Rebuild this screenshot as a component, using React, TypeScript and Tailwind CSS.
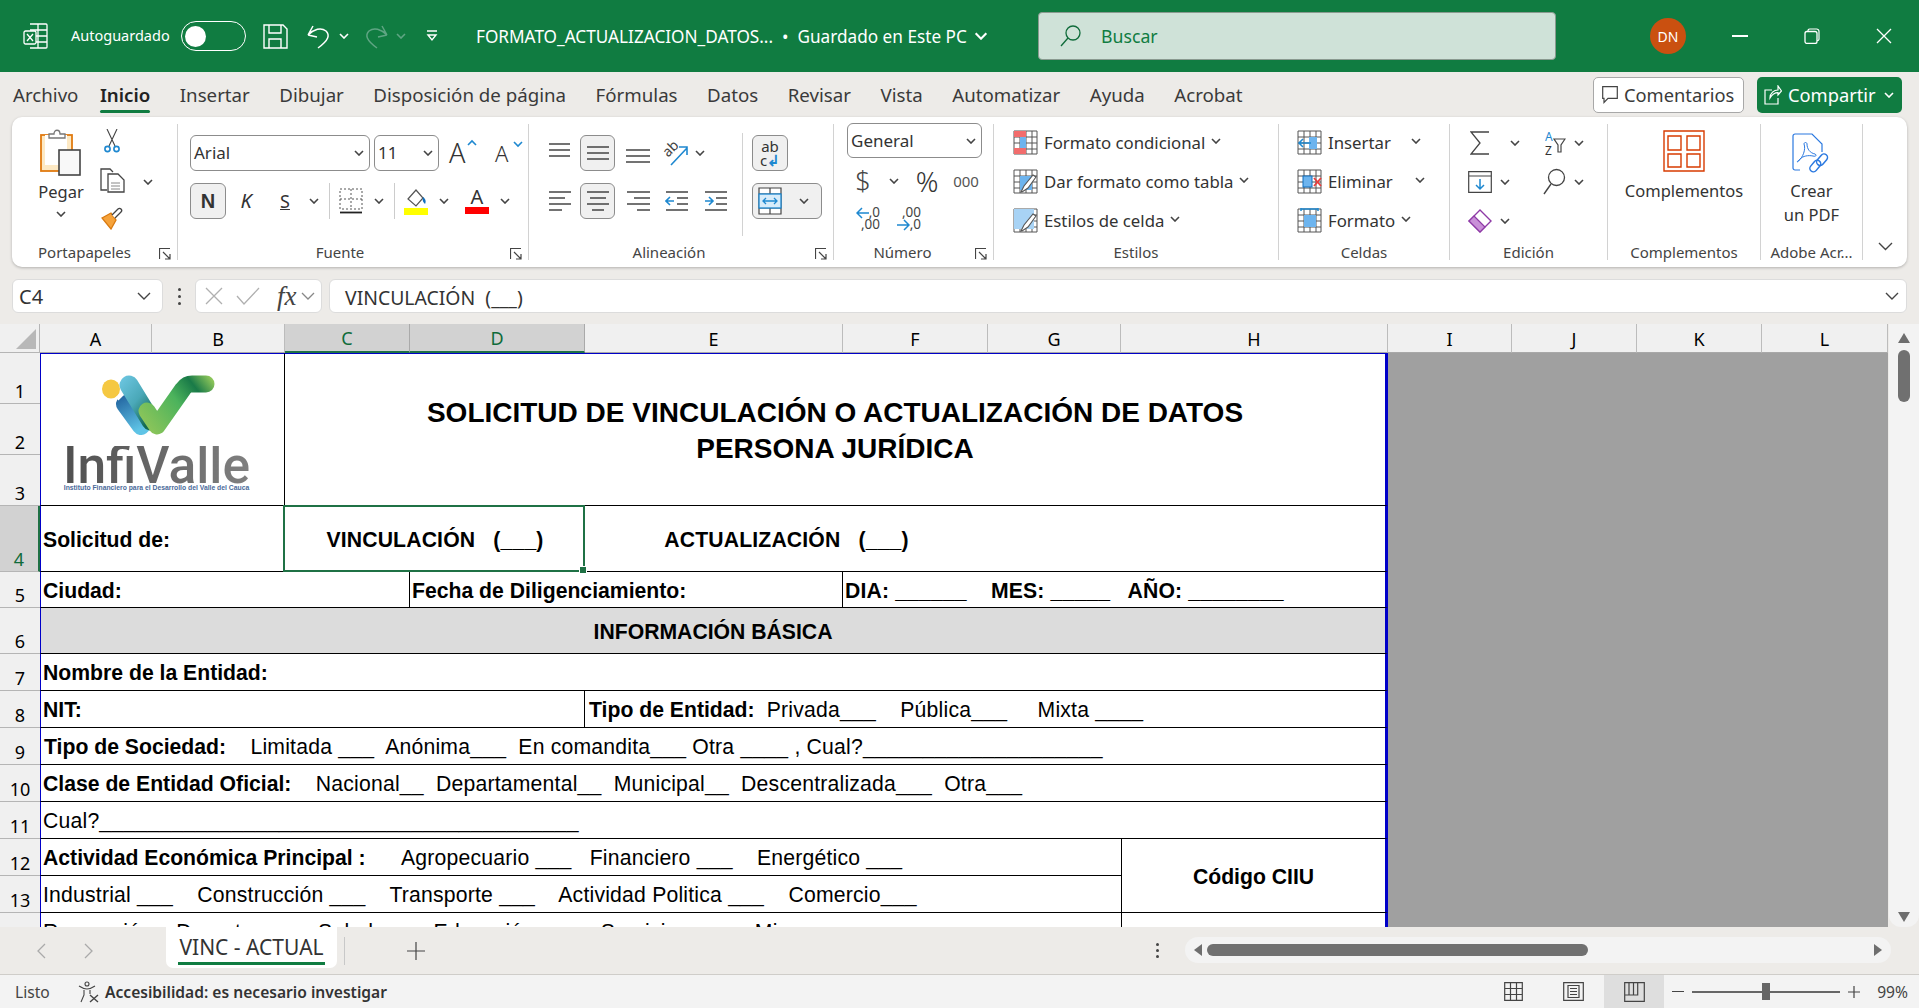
import React from 'react';
import clsx from 'clsx';

const Chev = ({ color = '#444', className }: { color?: string; className?: string }) => (
  <svg width="10" height="6" viewBox="0 0 10 6" className={clsx('shrink-0', className)}>
    <path d="M1 1l4 4 4-4" fill="none" stroke={color} strokeWidth="1.6" />
  </svg>
);

const Slot = ({ className, children }: { className: string; children?: React.ReactNode }) => (
  <div className={clsx('flex items-center justify-center shrink-0 h-full', className)}>{children}</div>
);

const Launcher = () => (
  <svg width="12" height="12" viewBox="0 0 12 12" className="absolute right-[6px] bottom-[0px]">
    <path d="M.5 11V.5H11M4 4l7 7M11 6v5H6" fill="none" stroke="#444" strokeWidth="1.2" />
  </svg>
);

const Group = ({ className, label, labelClass, launcher, children }: { className: string; label: string; labelClass?: string; launcher?: boolean; children?: React.ReactNode }) => (
  <div className={clsx('relative flex flex-col shrink-0 my-[7px] border-r border-[#d2d2d2]', className)}>
    <div className="flex-1 min-h-0">{children}</div>
    <div className={clsx('h-[12px] mb-[2px] flex items-center justify-center text-[15px] text-[#444] whitespace-nowrap', labelClass)}>{label}</div>
    {launcher && <Launcher />}
  </div>
);

const Select = ({ className, text }: { className: string; text: string }) => (
  <div className={clsx('flex items-center justify-between h-[36px] px-[3px] pr-[5px] rounded-[6px] border border-[#8c8c8c] text-[17px] text-[#333] shrink-0', className)}>
    <span>{text}</span>
    <Chev />
  </div>
);

const Lines = ({ ys }: { ys: [number, number, number][] }) => (
  <svg width="24" height="22" viewBox="0 0 24 22">
    {ys.map(([y, a, b]) => (
      <path key={y + '-' + a} d={`M${a} ${y}H${b}`} stroke="#444" strokeWidth="1.5" />
    ))}
  </svg>
);

const ActiveBox = ({ className, children }: { className: string; children?: React.ReactNode }) => (
  <div className={clsx('flex items-center justify-center h-[36px] rounded-[6px] border border-[#8c8c8c] bg-[#f0f0f0] shrink-0', className)}>{children}</div>
);

const GridIcon = ({ children }: { children?: React.ReactNode }) => (
  <svg width="25" height="25" viewBox="0 0 25 25" className="shrink-0">
    <path d="M1 1h23v23H1zM1 7h23M1 13h23M1 19h23M7 1v23M13 1v23M19 1v23" fill="none" stroke="#555" strokeWidth="1" />
    {children}
  </svg>
);

const Brush = () => (
  <path d="M8 23l3-6 9-11 3 2-8 11-6 4z" fill="#fff" stroke="#555" strokeWidth="1.1" />
);

const StyleRow = ({ icon, text, chevClass }: { icon: React.ReactNode; text: string; chevClass?: string }) => (
  <div className="flex items-center h-[39px] text-[16.8px] text-[#333] whitespace-nowrap">
    {icon}
    <span className="ml-[6px]">{text}</span>
    <Chev className={clsx('mb-[3px]', chevClass ?? 'ml-[6px]')} />
  </div>
);

const colHeads: [string, string][] = [
  ['A', 'col-start-2'], ['B', 'col-start-3'], ['C', 'col-start-4'], ['D', 'col-start-5'], ['E', 'col-start-6'], ['F', 'col-start-7'],
  ['G', 'col-start-8'], ['H', 'col-start-9'], ['I', 'col-start-10'], ['J', 'col-start-11'], ['K', 'col-start-12'], ['L', 'col-start-13'],
];

const rowStarts = ['row-start-2', 'row-start-3', 'row-start-4', 'row-start-5', 'row-start-6', 'row-start-7', 'row-start-8', 'row-start-9', 'row-start-10', 'row-start-11', 'row-start-12', 'row-start-13', 'row-start-14', 'row-start-15'];

const Cell = ({ className, children }: { className: string; children?: React.ReactNode }) => (
  <div className={clsx('flex items-center overflow-hidden whitespace-pre bg-white border-b border-black px-[2px] pt-[2px] text-[21.2px] tracking-[0.2px] text-black', className)}>
    {children}
  </div>
);

const B = ({ wide, children }: { wide?: boolean; children: React.ReactNode }) => (
  <b className={clsx('font-bold', wide ? 'tracking-[0.15px]' : 'tracking-normal')}>{children}</b>
);

const InfiLogo = () => (
  <div className="flex flex-col items-center w-full h-full pt-[21px] bg-white tracking-normal">
    <svg width="116" height="60" viewBox="0 0 116 60" className="shrink-0 -ml-[8px]">
      <defs>
        <linearGradient id="stem" x1="20" y1="18" x2="40" y2="54" gradientUnits="userSpaceOnUse">
          <stop offset="0" stopColor="#1f5f9c" />
          <stop offset="1" stopColor="#5fc4e6" />
        </linearGradient>
        <linearGradient id="band" x1="16" y1="6" x2="56" y2="40" gradientUnits="userSpaceOnUse">
          <stop offset="0" stopColor="#6fc8e4" />
          <stop offset="0.55" stopColor="#4aa8b8" />
          <stop offset="1" stopColor="#12694f" />
        </linearGradient>
        <linearGradient id="vee" x1="48" y1="56" x2="112" y2="6" gradientUnits="userSpaceOnUse">
          <stop offset="0" stopColor="#8cc55a" />
          <stop offset="0.5" stopColor="#4cb35c" />
          <stop offset="0.78" stopColor="#197a48" />
          <stop offset="1" stopColor="#8cc55a" />
        </linearGradient>
      </defs>
      <ellipse cx="10" cy="14" rx="9" ry="9.5" fill="#f5c842" />
      <path d="M24 29l16 22" stroke="url(#stem)" strokeWidth="18" strokeLinecap="round" fill="none" />
      <path d="M16 24l10-10" stroke="#fff" strokeWidth="4" fill="none" />
      <path d="M30 10l22 36" stroke="url(#band)" strokeWidth="19" strokeLinecap="round" fill="none" transform="translate(-2 0)" />
      <path d="M46 36l10 15L82 14c3-4 5-5 9-5h14" stroke="url(#vee)" strokeWidth="17" strokeLinecap="round" strokeLinejoin="round" fill="none" />
    </svg>
    <span className="font-['Roboto',sans-serif] font-medium text-[51.5px] leading-[40px] bg-linear-to-r from-[#505050] to-[#808080] bg-clip-text text-transparent mt-[11px] -ml-[12px]">InfiValle</span>
    <span className="font-['Liberation_Sans',sans-serif] font-bold text-[6.8px] leading-[10px] text-[#4a6a9a] -mt-[3px] -ml-[12px] whitespace-nowrap">Instituto Financiero para el Desarrollo del Valle del Cauca</span>
  </div>
);

export default function App() {
  return (
    <div className="w-[1919px] h-[1008px] flex flex-col overflow-hidden bg-[#edebe8] font-['Noto_Sans',sans-serif] text-[#333]">
      {/* title bar */}
      <div className="h-[72px] shrink-0 flex items-center bg-[#107c41] text-white relative">
        <svg width="25" height="26" viewBox="0 0 25 26" className="ml-[23px] shrink-0">
          <path d="M7 1h16a1 1 0 0 1 1 1v22a1 1 0 0 1-1 1H7M7 7h17M7 13h17M7 19h17M15 1v24" fill="none" stroke="#fff" strokeWidth="1.3" />
          <rect x="1" y="8" width="12" height="13" rx="1.5" fill="#107c41" stroke="#fff" strokeWidth="1.3" />
          <path d="M4 11l6 7M10 11l-6 7" stroke="#fff" strokeWidth="1.3" />
        </svg>
        <span className="ml-[23px] text-[14.5px] w-[110px]">Autoguardado</span>
        <div className="w-[65px] h-[30px] rounded-full border-[1.5px] border-white flex items-center pl-[3px] shrink-0">
          <div className="w-[21px] h-[21px] rounded-full bg-white" />
        </div>
        <svg width="25" height="25" viewBox="0 0 25 25" className="ml-[17px] shrink-0">
          <path d="M1 1h19l4 4v19H1zM6 1v8h12V1M6 24v-9h12v9" fill="none" stroke="#fff" strokeWidth="1.4" />
        </svg>
        <svg width="26" height="26" viewBox="0 0 26 26" className="ml-[18px] shrink-0">
          <path d="M2 12l5-9M2 12l9 2M2 12c6-6 13-8 18-4 4 4 3 9-8 17" fill="none" stroke="#fff" strokeWidth="1.5" />
        </svg>
        <Chev color="#fff" className="ml-[7px]" />
        <svg width="26" height="26" viewBox="0 0 26 26" className="ml-[14px] shrink-0">
          <path d="M24 12l-5-9M24 12l-9 2M24 12c-6-6-13-8-18-4-4 4-3 9 8 17" fill="none" stroke="#5fa583" strokeWidth="1.5" />
        </svg>
        <Chev color="#5fa583" className="ml-[7px]" />
        <svg width="12" height="12" viewBox="0 0 12 12" className="ml-[20px] shrink-0">
          <path d="M1 1h10M2 5l4 5 4-5z" fill="none" stroke="#fff" strokeWidth="1.4" />
        </svg>
        <span className="ml-[38px] text-[17.2px] whitespace-pre w-[562px] flex items-center pt-[1px]">
          FORMATO_ACTUALIZACION_DATOS...  •  Guardado en Este PC
          <Chev color="#fff" className="ml-[7px] w-[14px] h-[8px]" />
        </span>
        <div className="w-[518px] h-[48px] rounded-[4px] bg-[#cfe2d8] border border-[#8a9a90] flex items-center shrink-0">
          <svg width="22" height="24" viewBox="0 0 22 24" className="ml-[21px]">
            <circle cx="13" cy="9" r="7" fill="none" stroke="#0f6b3a" strokeWidth="1.3" />
            <path d="M8 14L1 22" stroke="#0f6b3a" strokeWidth="1.3" />
          </svg>
          <span className="ml-[19px] text-[17.7px] text-[#107c41] pt-[1px]">Buscar</span>
        </div>
        <div className="ml-[94px] w-[36px] h-[36px] rounded-full bg-[#ca5010] flex items-center justify-center text-[14px] shrink-0">DN</div>
        <div className="ml-[46px] w-[16px] h-[1.5px] bg-white shrink-0" />
        <svg width="16" height="16" viewBox="0 0 16 16" className="ml-[56px] shrink-0">
          <path d="M4 3.5V2.6A1.6 1.6 0 0 1 5.6 1h7A2.4 2.4 0 0 1 15 3.4V11a1.5 1.5 0 0 1-1.5 1.5H13" fill="none" stroke="#fff" strokeWidth="1.2" />
          <rect x="1" y="3.5" width="12" height="12" rx="2" fill="none" stroke="#fff" strokeWidth="1.3" />
        </svg>
        <svg width="16" height="16" viewBox="0 0 16 16" className="ml-[56px] shrink-0">
          <path d="M1 1l14 14M15 1L1 15" stroke="#fff" strokeWidth="1.3" />
        </svg>
      </div>

      {/* tabs */}
      <div className="h-[45px] shrink-0 flex items-center pl-[13px] pr-[17px] text-[18.7px] text-[#3a3a3a]">
        <div className="flex items-center gap-[29.5px] flex-1 pt-[2px]">
          <span className="-mr-[8px]">Archivo</span>
          <span className="relative font-semibold text-[#222]">
            Inicio
            <span className="absolute left-0 right-0 -bottom-[3px] h-[3px] rounded-full bg-[#107c41]" />
          </span>
          <span>Insertar</span>
          <span>Dibujar</span>
          <span>Disposición de página</span>
          <span>Fórmulas</span>
          <span>Datos</span>
          <span>Revisar</span>
          <span>Vista</span>
          <span>Automatizar</span>
          <span>Ayuda</span>
          <span>Acrobat</span>
        </div>
        <div className="w-[151px] h-[36px] rounded-[5px] border border-[#a8a8a8] bg-white flex items-center pl-[8px] gap-[6px] mr-[13px] shrink-0 text-[18.3px]">
          <svg width="16" height="18" viewBox="0 0 16 18">
            <path d="M.7.7h14.6v11.6H6L2 16.5v-4.2H.7z" fill="none" stroke="#444" strokeWidth="1.2" />
          </svg>
          Comentarios
        </div>
        <div className="w-[145px] h-[36px] rounded-[5px] bg-[#107c41] text-white flex items-center pl-[7px] gap-[6px] shrink-0 text-[18.3px]">
          <svg width="18" height="20" viewBox="0 0 18 20">
            <path d="M8 5H1v14h13v-6M6 13c0-5 4-8 8-8V1l3.5 5L14 10V7.6c-3 0-6 2-8 5.4z" fill="none" stroke="#fff" strokeWidth="1.2" />
          </svg>
          Compartir
          <Chev color="#fff" className="ml-[2px]" />
        </div>
      </div>

      {/* ribbon */}
      <div className="mx-[12px] h-[150px] shrink-0 flex rounded-[10px] bg-white shadow-[0_1px_3px_rgba(0,0,0,0.25)] text-[#333]">
        <Group className="w-[166px]" label="Portapapeles" labelClass="pr-[20px]" launcher>
          <div className="flex h-full">
            <div className="w-[88px] flex flex-col items-center pl-[10px]">
              <svg width="42" height="48" viewBox="0 0 42 48" className="mt-[4px]">
                <rect x="1" y="7" width="31" height="36" fill="#fde9c4" stroke="#e07a10" strokeWidth="1.8" />
                <rect x="5" y="7" width="22" height="30" fill="#fff" />
                <path d="M9 10V6h5c0-5 6-5 6 0h5v4z" fill="#fff" stroke="#777" strokeWidth="1.3" />
                <rect x="19" y="22" width="21" height="25" fill="#f8f8f8" stroke="#444" strokeWidth="1.6" />
              </svg>
              <span className="text-[16.5px] leading-[20px] mt-[6px]">Pegar</span>
              <Chev className="mt-[9px]" />
            </div>
            <div className="flex flex-col items-center w-[34px] -ml-[5px] pt-[5px]">
              <svg width="16" height="24" viewBox="0 0 16 24">
                <path d="M3 0l8 17M13 0L5 17" stroke="#444" strokeWidth="1.1" fill="none" />
                <circle cx="3.5" cy="20" r="2.6" fill="none" stroke="#1e88d0" strokeWidth="1.6" />
                <circle cx="12.5" cy="20" r="2.6" fill="none" stroke="#1e88d0" strokeWidth="1.6" />
              </svg>
              <svg width="25" height="25" viewBox="0 0 25 25" className="mt-[15px]">
                <path d="M7 22H1V1h9l3 3" fill="none" stroke="#444" strokeWidth="1.3" />
                <path d="M8 6h10l6 6v12H8z" fill="#fff" stroke="#444" strokeWidth="1.3" />
                <path d="M11 15h9M11 18h9M11 21h9" stroke="#888" strokeWidth="1" />
              </svg>
              <svg width="25" height="23" viewBox="0 0 25 23" className="mt-[14px]">
                <path d="M2 11l9-5 5 7-5 9z" fill="#f6a33b" stroke="#d97a10" strokeWidth="1.3" />
                <path d="M12 8l6-6c2-2 5 1 3 3l-6 6" fill="#fff" stroke="#444" strokeWidth="1.3" />
              </svg>
            </div>
            <Chev className="mt-[55px] ml-[14px]" />
          </div>
        </Group>

        <Group className="w-[351px]" label="Fuente" labelClass="pr-[26px]" launcher>
          <div className="flex flex-col gap-[12px] pl-[12px] pt-[11px]">
            <div className="flex items-center h-[36px] gap-[4px]">
              <Select className="w-[180px]" text="Arial" />
              <Select className="w-[65px]" text="11" />
              <Slot className="w-[36px] relative text-[27px] font-light justify-start pl-[6px]">
                A
                <svg width="10" height="7" viewBox="0 0 10 7" className="absolute right-[2px] top-[4px]"><path d="M1 6l4-4 4 4" fill="none" stroke="#1e88d0" strokeWidth="1.6" /></svg>
              </Slot>
              <Slot className="w-[44px] relative text-[22px] font-light justify-start pl-[12px]">
                A
                <svg width="10" height="7" viewBox="0 0 10 7" className="absolute right-[4px] top-[6px]"><path d="M1 1l4 4 4-4" fill="none" stroke="#1e88d0" strokeWidth="1.6" /></svg>
              </Slot>
            </div>
            <div className="flex items-center h-[36px]">
              <ActiveBox className="w-[36px] text-[20px] font-bold font-['Liberation_Sans',sans-serif]">N</ActiveBox>
              <Slot className="w-[40px] text-[20px] italic">K</Slot>
              <Slot className="w-[38px] text-[18px] underline">S</Slot>
              <Slot className="w-[20px]"><Chev /></Slot>
              <Slot className="w-[10px]"><div className="w-px h-[36px] bg-[#ccc]" /></Slot>
              <Slot className="w-[33px]">
                <svg width="24" height="26" viewBox="0 0 24 26">
                  <path d="M1 1h22v20H1zM12 1v20M1 11h22" fill="none" stroke="#555" strokeWidth="1" strokeDasharray="2 2" />
                  <path d="M1 24.5h22" stroke="#222" strokeWidth="1.8" />
                </svg>
              </Slot>
              <Slot className="w-[24px]"><Chev /></Slot>
              <Slot className="w-[6px]"><div className="w-px h-[36px] bg-[#ccc]" /></Slot>
              <Slot className="w-[38px]">
                <svg width="24" height="28" viewBox="0 0 24 28">
                  <path d="M4 12L12 3l7 8-7 8z" fill="#fff" stroke="#555" strokeWidth="1.2" />
                  <path d="M19 10c3 2 3 5 2 7-2-2-3-4-2-7z" fill="#106ebe" />
                  <rect x="0" y="21" width="24" height="7" fill="#ffff00" />
                </svg>
              </Slot>
              <Slot className="w-[18px]"><Chev /></Slot>
              <Slot className="w-[48px]">
                <span className="flex flex-col items-center leading-[20px] text-[20px] -mt-[2px]">
                  A
                  <span className="block w-[24px] h-[7px] bg-[#ff0000]" />
                </span>
              </Slot>
              <Slot className="w-[8px]"><Chev /></Slot>
            </div>
          </div>
        </Group>

        <Group className="w-[305px]" label="Alineación" labelClass="pr-[24px]" launcher>
          <div className="flex h-full">
            <div className="flex flex-col gap-[12px] pt-[11px] w-[213px]">
              <div className="flex items-center h-[36px]">
                <Slot className="w-[51px] justify-start pl-[19px]"><Lines ys={[[2, 1, 22], [8, 1, 22], [14, 1, 22]]} /></Slot>
                <ActiveBox className="w-[35px]"><Lines ys={[[5, 1, 23], [11, 1, 23], [17, 1, 23]]} /></ActiveBox>
                <Slot className="w-[35px] justify-end"><Lines ys={[[8, 0, 24], [14, 0, 24], [20, 0, 24]]} /></Slot>
                <Slot className="w-[39px] justify-end">
                  <svg width="26" height="26" viewBox="0 0 26 26">
                    <text x="0" y="14" transform="rotate(-45 7 10)" fontSize="14" fill="#444">ab</text>
                    <path d="M8 25L24 8M16 7h8v8" fill="none" stroke="#1e88d0" strokeWidth="1.6" />
                  </svg>
                </Slot>
                <Slot className="w-[22px]"><Chev /></Slot>
              </div>
              <div className="flex items-center h-[36px]">
                <Slot className="w-[51px] justify-start pl-[19px]"><Lines ys={[[2, 1, 23], [8, 1, 17], [14, 1, 23], [20, 1, 14]]} /></Slot>
                <ActiveBox className="w-[35px]"><Lines ys={[[2, 1, 23], [8, 4, 20], [14, 1, 23], [20, 6, 18]]} /></ActiveBox>
                <Slot className="w-[35px] justify-end"><Lines ys={[[2, 1, 24], [8, 8, 24], [14, 1, 24], [20, 11, 24]]} /></Slot>
                <Slot className="w-[39px] justify-end">
                  <svg width="24" height="22" viewBox="0 0 24 22">
                    <path d="M1 2h22M12 8h11M12 14h11M1 20h22" stroke="#444" strokeWidth="1.5" />
                    <path d="M9 11H1M5 7l-4 4 4 4" fill="none" stroke="#1e88d0" strokeWidth="1.6" />
                  </svg>
                </Slot>
                <Slot className="w-[39px] justify-end">
                  <svg width="24" height="22" viewBox="0 0 24 22">
                    <path d="M1 2h22M12 8h11M12 14h11M1 20h22" stroke="#444" strokeWidth="1.5" />
                    <path d="M1 11h8M5 7l4 4-4 4" fill="none" stroke="#1e88d0" strokeWidth="1.6" />
                  </svg>
                </Slot>
              </div>
            </div>
            <div className="w-px h-[103px] bg-[#d2d2d2] mt-[9px]" />
            <div className="flex flex-col gap-[12px] pt-[11px] pl-[9px]">
              <ActiveBox className="w-[36px] relative text-[15px]">
                <span className="leading-[14px] text-center">ab<br />c<span className="text-[#1e88d0] font-bold">↲</span></span>
              </ActiveBox>
              <ActiveBox className="w-[70px] gap-[17px] justify-start pl-[5px]">
                <svg width="24" height="28" viewBox="0 0 24 28">
                  <path d="M1 1h22v26H1zM1 7h22M1 21h22M12 1v6M12 21v6" fill="#fff" stroke="#444" strokeWidth="1.2" />
                  <rect x="1" y="7" width="22" height="14" fill="#d7ecfa" stroke="#1e88d0" strokeWidth="1.3" />
                  <path d="M5 14h14M8 11l-3 3 3 3M16 11l3 3-3 3" fill="none" stroke="#1e88d0" strokeWidth="1.3" />
                </svg>
                <Chev />
              </ActiveBox>
            </div>
          </div>
        </Group>

        <Group className="w-[160px]" label="Número" labelClass="pr-[22px]" launcher>
          <div className="flex flex-col pl-[13px] pr-[12px] h-full">
            <Select className="w-[135px] !h-[35px] -mt-px" text="General" />
            <div className="flex items-center h-[30px] mt-[8px] ml-[4px]">
              <Slot className="w-[24px] text-[27px] font-light text-[#444]">$</Slot>
              <Slot className="w-[22px] ml-[8px]"><Chev /></Slot>
              <Slot className="w-[30px] ml-[7px] text-[28px] font-light">%</Slot>
              <Slot className="w-[30px] ml-[9px] text-[15px] text-[#555]">000</Slot>
            </div>
            <div className="flex items-center h-[28px] mt-[9px] pl-[9px] gap-[17px]">
              <div className="relative w-[24px] h-[26px] text-[13.5px] leading-[12px] text-right text-[#444]">
                ,0<br />,00
                <svg width="13" height="12" viewBox="0 0 13 12" className="absolute left-0 top-[1px]">
                  <path d="M13 6H1M6 1L1 6l5 5" fill="none" stroke="#1e88d0" strokeWidth="1.5" />
                </svg>
              </div>
              <div className="relative w-[24px] h-[26px] text-[13.5px] leading-[12px] text-right text-[#444]">
                ,00<br />,0
                <svg width="13" height="12" viewBox="0 0 13 12" className="absolute left-0 bottom-[1px]">
                  <path d="M0 6h12M7 1l5 5-5 5" fill="none" stroke="#1e88d0" strokeWidth="1.5" />
                </svg>
              </div>
            </div>
          </div>
        </Group>

        <Group className="w-[285px]" label="Estilos">
          <div className="pl-[19px] -mt-[1px]">
            <StyleRow text="Formato condicional" icon={<GridIcon><rect x="1" y="1" width="12" height="6" fill="#f26d6d" /><rect x="7" y="7" width="6" height="11" fill="#6db4ee" /><rect x="1" y="18" width="12" height="6" fill="#f26d6d" /></GridIcon>} />
            <StyleRow text="Dar formato como tabla" icon={<GridIcon><rect x="7" y="7" width="12" height="14" fill="#6db4ee" /><Brush /></GridIcon>} />
            <StyleRow text="Estilos de celda" icon={<GridIcon><rect x="1" y="1" width="20" height="20" fill="#a8d3f5" /><Brush /></GridIcon>} />
          </div>
        </Group>

        <Group className="w-[171px]" label="Celdas">
          <div className="pl-[18px] -mt-[1px]">
            <StyleRow text="Insertar" chevClass="ml-[20px]" icon={<GridIcon><rect x="12" y="7" width="8" height="12" fill="#6db4ee" /><path d="M14 13H2M6 9l-4 4 4 4" fill="none" stroke="#1e88d0" strokeWidth="1.6" /></GridIcon>} />
            <StyleRow text="Eliminar" chevClass="ml-[22px]" icon={<GridIcon><rect x="6" y="7" width="9" height="11" fill="#6db4ee" stroke="#106ebe" /><path d="M17 9l7 8M24 9l-7 8" stroke="#e83b3b" strokeWidth="1.8" /></GridIcon>} />
            <StyleRow text="Formato" chevClass="ml-[6px]" icon={<GridIcon><rect x="7" y="7" width="12" height="12" fill="#6db4ee" /><path d="M4 1h17M4 0v3M21 0v3" stroke="#1e88d0" strokeWidth="1.5" /></GridIcon>} />
          </div>
        </Group>

        <Group className="w-[158px]" label="Edición">
          <div className="-mt-[1px] pl-[20px]">
            <div className="flex items-center h-[39px]">
              <svg width="20" height="24" viewBox="0 0 20 24" className="shrink-0">
                <path d="M19 1H1l9 11-9 11h18" fill="none" stroke="#444" strokeWidth="1.3" />
              </svg>
              <Chev className="ml-[20px]" />
              <svg width="21" height="26" viewBox="0 0 21 26" className="ml-[25px]">
                <text x="0" y="11" fontSize="12" fill="#1e88d0">A</text>
                <text x="0" y="25" fontSize="12" fill="#333">Z</text>
                <path d="M9 9h11l-4 6v7h-3v-7z" fill="none" stroke="#444" strokeWidth="1.2" />
              </svg>
              <Chev className="ml-[8px]" />
            </div>
            <div className="flex items-center h-[39px] -ml-[2px]">
              <svg width="24" height="22" viewBox="0 0 24 22">
                <path d="M.7.7h22.6v20.6H.7zM.7 5h22.6" fill="#fff" stroke="#444" strokeWidth="1.2" />
                <path d="M12 8v10M8 14l4 4 4-4" fill="none" stroke="#1e88d0" strokeWidth="1.5" />
              </svg>
              <Chev className="ml-[8px]" />
              <svg width="23" height="27" viewBox="0 0 23 27" className="ml-[33px]">
                <circle cx="13.5" cy="9.5" r="8" fill="none" stroke="#444" strokeWidth="1.3" />
                <path d="M8 16L1 26" stroke="#444" strokeWidth="1.4" />
              </svg>
              <Chev className="ml-[8px]" />
            </div>
            <div className="flex items-center h-[39px] -ml-[2px]">
              <svg width="24" height="24" viewBox="0 0 24 24">
                <path d="M12 1l11 11-11 11L1 12z" fill="#fff" stroke="#8e3aa6" strokeWidth="1.4" />
                <path d="M6 7l11 11-5 5L1 12z" fill="#c990d8" stroke="#8e3aa6" strokeWidth="1.2" />
              </svg>
              <Chev className="ml-[8px]" />
            </div>
          </div>
        </Group>

        <Group className="w-[153px]" label="Complementos">
          <div className="flex flex-col items-center pt-[6px]">
            <svg width="42" height="42" viewBox="0 0 42 42">
              <path d="M1 1h40v40H1z" fill="none" stroke="#d83b01" strokeWidth="1.4" />
              <path d="M5 6h13v14H5zM24 6h13v14H24zM5 24h13v13H5zM24 24h13v13H24z" fill="none" stroke="#d83b01" strokeWidth="1.4" />
            </svg>
            <span className="text-[16.5px] mt-[7px] leading-[24px]">Complementos</span>
          </div>
        </Group>

        <Group className="w-[102px]" label="Adobe Acr...">
          <div className="flex flex-col items-center pt-[9px]">
            <svg width="39" height="42" viewBox="0 0 39 42">
              <path d="M8 37H3a2 2 0 0 1-2-2V3a2 2 0 0 1 2-2h17l10 10v8" fill="none" stroke="#2b79e0" strokeWidth="1.2" />
              <path d="M6 28c5-3 8-12 6-17 0-2 3-2 3 0 0 5 3 9 8 10 2 1 1 3-2 2-5-1-10 0-13 3-2 4-4 3-2 2z" fill="none" stroke="#2b79e0" strokeWidth="1" />
              <g fill="none" stroke="#2b79e0" strokeWidth="1.5">
                <rect x="27" y="20" width="7" height="13" rx="3.5" transform="rotate(40 30 26)" />
                <rect x="20" y="27" width="7" height="13" rx="3.5" transform="rotate(40 24 33)" />
              </g>
            </svg>
            <span className="text-[16.5px] leading-[24px] text-center mt-[4px]">Crear<br />un PDF</span>
          </div>
        </Group>

        <div className="flex-1 flex items-end justify-center pb-[16px]">
          <svg width="15" height="9" viewBox="0 0 15 9"><path d="M1 1l6.5 6.5L14 1" fill="none" stroke="#444" strokeWidth="1.4" /></svg>
        </div>
      </div>

      {/* formula bar */}
      <div className="h-[34px] mt-[12px] mx-[12px] shrink-0 flex items-center text-[#333]">
        <div className="w-[151px] h-full bg-white rounded-[6px] border border-[#dcdcdc] flex items-center justify-between pl-[6px] pr-[11px] text-[20px]">
          <span className="pt-[2px]">C4</span>
          <svg width="14" height="8" viewBox="0 0 14 8"><path d="M1 1l6 6 6-6" fill="none" stroke="#444" strokeWidth="1.4" /></svg>
        </div>
        <div className="w-[32px] flex flex-col items-center gap-[4px]">
          <i className="w-[3px] h-[3px] bg-[#444] rounded-full" />
          <i className="w-[3px] h-[3px] bg-[#444] rounded-full" />
          <i className="w-[3px] h-[3px] bg-[#444] rounded-full" />
        </div>
        <div className="w-[127px] h-full bg-white rounded-[6px] border border-[#dcdcdc] flex items-center pl-[9px]">
          <svg width="18" height="18" viewBox="0 0 18 18" className="shrink-0"><path d="M1 1l16 16M17 1L1 17" stroke="#b0b0b0" strokeWidth="1.3" /></svg>
          <svg width="24" height="18" viewBox="0 0 24 18" className="ml-[13px] shrink-0"><path d="M1 9l7 8L23 1" fill="none" stroke="#b0b0b0" strokeWidth="1.3" /></svg>
          <span className="ml-[17px] font-['Liberation_Serif',serif] italic text-[27px] leading-none text-[#444]">fx</span>
          <svg width="14" height="8" viewBox="0 0 14 8" className="ml-[4px] shrink-0"><path d="M1 1l6 6 6-6" fill="none" stroke="#888" strokeWidth="1.3" /></svg>
        </div>
        <div className="ml-[7px] flex-1 h-full bg-white rounded-[6px] border border-[#dcdcdc] flex items-center justify-between pl-[15px] pr-[7px] text-[19.4px] whitespace-pre">
          <span className="pt-[3px]">VINCULACIÓN  (___)</span>
          <svg width="14" height="8" viewBox="0 0 14 8"><path d="M1 1l6 6 6-6" fill="none" stroke="#444" strokeWidth="1.4" /></svg>
        </div>
      </div>

      {/* sheet */}
      <div className="h-[603px] mt-[11px] shrink-0 flex overflow-hidden">
        <div className="w-[1889px] h-[603px] overflow-hidden shrink-0 font-['Liberation_Sans',Arial,sans-serif]">
          <div className="grid grid-cols-[40px_112px_133px_125px_175px_258px_145px_133px_267px_124px_125px_125px_126px] grid-rows-[29px_51px_51px_51px_66px_36px_46px_37px_37px_37px_37px_37px_37px_37px_37px] w-[1889px]">
            {/* corner */}
            <div className="col-start-1 row-start-1 bg-[#f0f0f0] border-b border-r border-[#b5b5b5] flex items-end justify-end p-[3px]">
              <svg width="20" height="20" viewBox="0 0 20 20"><path d="M20 0v20H0z" fill="#b8b8b8" /></svg>
            </div>
            {colHeads.map(([c, cls]) => {
              const on = c === 'C' || c === 'D';
              return (
                <div key={c} className={clsx(cls, "row-start-1 flex items-center justify-center pt-[2px] font-['Noto_Sans',sans-serif] text-[18px] border-r", on ? 'bg-[#d2d2d2] text-[#0f6b3a] border-b-2 border-b-[#1f7145] border-r-[#aaa]' : 'bg-[#f0f0f0] text-black border-b border-b-[#a8a8a8] border-r-[#bcbcbc]')}>{c}</div>
              );
            })}
            {rowStarts.map((cls, i) => {
              const on = i === 3;
              return (
                <div key={cls} className={clsx(cls, "col-start-1 flex items-end justify-center font-['Noto_Sans',sans-serif] text-[18px] leading-[23px] border-b border-b-[#b5b5b5]", on ? 'bg-[#d2d2d2] text-[#0f6b3a] border-r-2 border-r-[#1f7145]' : 'bg-[#f0f0f0] text-black')}>{i + 1}</div>
              );
            })}

            {/* unused sheet area */}
            <div className="col-start-10 col-span-4 row-start-2 row-span-14 bg-[#a0a0a0]" />

            {/* form */}
            <Cell className="col-start-2 col-span-2 row-start-2 row-span-3 !p-0 border-l border-l-[#0000c8] border-t border-t-[#0000c8] border-r border-r-black"><InfiLogo /></Cell>
            <Cell className="col-start-4 col-span-6 row-start-2 row-span-3 justify-center text-center border-t border-t-[#0000c8] border-r-[3px] border-r-[#0000c8]">
              <div className="font-bold text-[28px] leading-[36px] tracking-normal">SOLICITUD DE VINCULACIÓN O ACTUALIZACIÓN DE DATOS<br />PERSONA JURÍDICA</div>
            </Cell>

            <Cell className="col-start-2 col-span-2 row-start-5 border-l border-l-[#0000c8]"><B>Solicitud de:</B></Cell>
            <Cell className="relative col-start-4 col-span-2 row-start-5 justify-center !overflow-visible"><B wide>VINCULACIÓN   (___)</B></Cell>
            <Cell className="col-start-6 col-span-2 row-start-5 justify-center"><B wide>ACTUALIZACIÓN   (___)</B></Cell>
            <Cell className="col-start-8 col-span-2 row-start-5 border-r-[3px] border-r-[#0000c8]" />

            <Cell className="col-start-2 col-span-3 row-start-6 border-l border-l-[#0000c8] border-r border-r-black"><B>Ciudad:</B></Cell>
            <Cell className="col-start-5 col-span-2 row-start-6 border-r border-r-black"><B>Fecha de Diligenciamiento:</B></Cell>
            <Cell className="col-start-7 col-span-3 row-start-6 border-r-[3px] border-r-[#0000c8]"><B wide>DIA: ______    MES: _____   AÑO: ________</B></Cell>

            <Cell className="col-start-2 col-span-8 row-start-7 justify-center !bg-[#dcdcdc] border-l border-l-[#0000c8] border-r-[3px] border-r-[#0000c8]"><B>INFORMACIÓN BÁSICA</B></Cell>

            <Cell className="col-start-2 col-span-8 row-start-8 border-l border-l-[#0000c8] border-r-[3px] border-r-[#0000c8]"><B>Nombre de la Entidad:</B></Cell>

            <Cell className="col-start-2 col-span-4 row-start-9 border-l border-l-[#0000c8] border-r border-r-black"><B>NIT:</B></Cell>
            <Cell className="col-start-6 col-span-4 row-start-9 border-r-[3px] border-r-[#0000c8]"><span className="ml-[2px]"><B>Tipo de Entidad:</B>  Privada___    Pública___     Mixta ____</span></Cell>

            <Cell className="col-start-2 col-span-8 row-start-10 border-l border-l-[#0000c8] border-r-[3px] border-r-[#0000c8]"><span className="ml-px"><B>Tipo de Sociedad:</B>    Limitada ___  Anónima___  En comandita___ Otra ____ , Cual?____________________</span></Cell>

            <Cell className="col-start-2 col-span-8 row-start-11 border-l border-l-[#0000c8] border-r-[3px] border-r-[#0000c8]"><span><B>Clase de Entidad Oficial:</B>    Nacional__  Departamental__  Municipal__  Descentralizada___  Otra___</span></Cell>

            <Cell className="col-start-2 col-span-8 row-start-12 border-l border-l-[#0000c8] border-r-[3px] border-r-[#0000c8]">Cual?________________________________________</Cell>

            <Cell className="col-start-2 col-span-7 row-start-13 border-l border-l-[#0000c8]"><span><B>Actividad Económica Principal :</B>      Agropecuario ___   Financiero ___    Energético ___</span></Cell>
            <Cell className="col-start-9 row-start-13 row-span-2 justify-center border-l border-l-black border-r-[3px] border-r-[#0000c8]"><B>Código CIIU</B></Cell>
            <Cell className="col-start-2 col-span-7 row-start-14 border-l border-l-[#0000c8]">Industrial ___    Construcción ___    Transporte ___    Actividad Politica ___    Comercio___</Cell>

            <Cell className="col-start-2 col-span-7 row-start-15 border-l border-l-[#0000c8]">Recreación _ Deportes ___  Salud ___   Educación ___    Servicios ___    Minas ___</Cell>
            <Cell className="col-start-9 row-start-15 border-l border-l-black border-r-[3px] border-r-[#0000c8]" />

            {/* active cell outline, sits over the grid */}
            <div className="relative col-start-4 col-span-2 row-start-5 pointer-events-none -ml-[2px] -mt-px border-2 border-[#1f7145] h-[67px] w-[302px] z-10">
              <span className="absolute -right-[3px] -bottom-[3px] w-[6px] h-[6px] bg-[#1f7145] outline outline-1 outline-white" />
            </div>
          </div>
        </div>

        {/* vertical scrollbar */}
        <div className="flex-1 flex flex-col items-center bg-[#f3f3f3] rounded-b-[12px]">
          <svg width="14" height="12" viewBox="0 0 14 12" className="mt-[8px]"><path d="M7 1l6 10H1z" fill="#6e6e6e" /></svg>
          <div className="w-[12px] h-[52px] rounded-full bg-[#707070] mt-[6px]" />
          <div className="flex-1" />
          <svg width="14" height="12" viewBox="0 0 14 12" className="mb-[4px]"><path d="M7 11l6-10H1z" fill="#6e6e6e" /></svg>
        </div>
      </div>

      {/* sheet tabs */}
      <div className="h-[48px] shrink-0 flex items-start border-b border-[#cfcdc9] text-[#333]">
        <div className="w-[166px] h-full flex items-center pl-[36px] gap-[38px] shrink-0">
          <svg width="10" height="16" viewBox="0 0 10 16"><path d="M9 1L2 8l7 7" fill="none" stroke="#aaa" strokeWidth="1.3" /></svg>
          <svg width="10" height="16" viewBox="0 0 10 16"><path d="M1 1l7 7-7 7" fill="none" stroke="#aaa" strokeWidth="1.3" /></svg>
        </div>
        <div className="relative w-[171px] h-[41px] bg-white rounded-b-[7px] flex items-center justify-center text-[21px] shrink-0 whitespace-nowrap">
          VINC - ACTUAL
          <span className="absolute left-[12px] right-[12px] bottom-[3px] h-[3px] bg-[#107c41]" />
        </div>
        <div className="w-px h-[28px] bg-[#c8c8c8] ml-[7px] mt-[10px] shrink-0" />
        <svg width="18" height="18" viewBox="0 0 18 18" className="ml-[62px] mt-[15px] shrink-0"><path d="M9 0v18M0 9h18" stroke="#444" strokeWidth="1.2" /></svg>
        <div className="ml-[731px] mt-[16px] flex flex-col gap-[3px] shrink-0">
          <i className="w-[3px] h-[3px] bg-[#444] rounded-full" />
          <i className="w-[3px] h-[3px] bg-[#444] rounded-full" />
          <i className="w-[3px] h-[3px] bg-[#444] rounded-full" />
        </div>
        <div className="ml-[26px] mt-[10px] w-[706px] h-[26px] rounded-full bg-[#f3f3f3] flex items-center justify-between px-[8px] shrink-0">
          <svg width="10" height="14" viewBox="0 0 10 14"><path d="M9 1L1 7l8 6z" fill="#6e6e6e" /></svg>
          <div className="w-[381px] h-[12px] rounded-full bg-[#707070] ml-[4px] mr-auto" />
          <svg width="10" height="14" viewBox="0 0 10 14"><path d="M1 1l8 6-8 6z" fill="#6e6e6e" /></svg>
        </div>
      </div>

      {/* status bar */}
      <div className="flex-1 flex items-center bg-[#f3f3f3] text-[15.6px] text-[#444]">
        <span className="ml-[15px] w-[63px] pt-[2px]">Listo</span>
        <svg width="22" height="22" viewBox="0 0 22 22" className="shrink-0">
          <circle cx="9" cy="3" r="2" fill="none" stroke="#444" strokeWidth="1.1" />
          <path d="M1 5c3 2 5 3 8 3s5-1 8-3M6 9v5l-3 7M12 9v4" fill="none" stroke="#444" strokeWidth="1.1" />
          <path d="M12 14l8 7M20 14l-8 7" stroke="#444" strokeWidth="1.4" />
        </svg>
        <span className="ml-[5px] pt-[2px] font-semibold text-[#333] whitespace-nowrap">Accesibilidad: es necesario investigar</span>
        <div className="flex-1" />
        <svg width="19" height="19" viewBox="0 0 19 19" className="shrink-0"><path d="M.7.7h17.6v17.6H.7zM.7 6.5h17.6M.7 12.5h17.6M6.5.7v17.6M12.5.7v17.6" fill="none" stroke="#444" strokeWidth="1.2" /></svg>
        <svg width="21" height="19" viewBox="0 0 21 19" className="ml-[40px] shrink-0"><path d="M.7.7h19.6v17.6H.7zM5 3.5h11v12H5zM7 6.5h7M7 9.5h7M7 12.5h7" fill="none" stroke="#444" strokeWidth="1.2" /></svg>
        <div className="ml-[20px] w-[60px] h-full bg-[#dedede] flex items-center justify-center shrink-0">
          <svg width="21" height="20" viewBox="0 0 21 20"><path d="M.7.7h19.6v18.6H.7zM.7 13h13V.7M5 .7V13M9.5.7V13" fill="none" stroke="#444" strokeWidth="1.2" /></svg>
        </div>
        <div className="ml-[8px] w-[12px] h-[1.5px] bg-[#444] shrink-0" />
        <div className="relative ml-[8px] w-[148px] h-[2px] bg-[#666] shrink-0">
          <span className="absolute left-[70px] -top-[8px] w-[8px] h-[17px] bg-[#666]" />
        </div>
        <svg width="12" height="12" viewBox="0 0 12 12" className="ml-[8px] shrink-0"><path d="M6 0v12M0 6h12" stroke="#444" strokeWidth="1.2" /></svg>
        <span className="ml-[17px] mr-[11px] pt-[2px] shrink-0">99%</span>
      </div>
    </div>
  );
}
